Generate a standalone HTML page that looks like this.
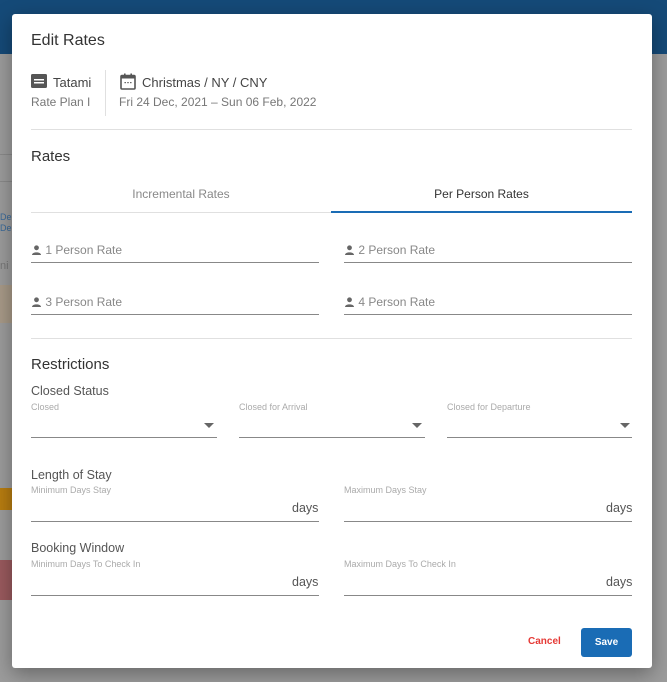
<!DOCTYPE html>
<html><head><meta charset="utf-8"><style>
*{box-sizing:border-box;margin:0;padding:0}
body{width:667px;height:682px;overflow:hidden;background:#9c9c9c;font-family:"Liberation Sans",Roboto,sans-serif;position:relative}
.hdr{position:absolute;left:0;top:0;width:667px;height:54px;background:#154a78}
.bl{position:absolute;left:0;width:12px;height:1px;background:#8a8a8a}
.dlg{position:absolute;left:12px;top:14px;width:640px;height:654px;background:#fff;border-radius:3px;box-shadow:0 6px 20px rgba(0,0,0,.35)}
.a{position:absolute;white-space:nowrap}
.t{color:#333}
.g{color:#777}
.lg{color:#999}
.line{position:absolute;height:1px;background:#888}
.hr{position:absolute;height:1px;background:#e0e0e0}
.caret{position:absolute;width:0;height:0;border-left:5px solid transparent;border-right:5px solid transparent;border-top:5px solid #666}
</style></head><body>
<div class="hdr"></div>
<div class="bl" style="top:154px"></div><div class="bl" style="top:181px"></div>
<div class="a" style="left:0;top:212px;width:12px;height:24px;font-size:9px;color:#3a6a9a;line-height:11px">De<br>De</div>
<div class="a" style="left:0;top:260px;width:12px;height:22px;color:#777;font-size:11px">ni</div>
<div class="a" style="left:0;top:285px;width:12px;height:38px;background:#a89a88"></div>
<div class="a" style="left:0;top:488px;width:12px;height:22px;background:#b87d10"></div>
<div class="a" style="left:0;top:560px;width:12px;height:40px;background:#9a5a5e"></div>
<div class="dlg">
<div class="a t" style="left:19px;top:18px;font-size:16px">Edit Rates</div>
<svg class="a" style="left:19px;top:60px" width="16" height="14" viewBox="0 0 16 14"><rect x="0" y="0" width="16" height="14" rx="1.5" fill="#555"/><rect x="3" y="5" width="10" height="1.5" fill="#fff"/><rect x="3" y="8" width="10" height="1.5" fill="#fff"/></svg>
<div class="a t" style="left:41px;top:61px;font-size:13px;color:#444">Tatami</div>
<div class="a g" style="left:19px;top:81px;font-size:12px">Rate Plan I</div>
<div class="a" style="left:93px;top:56px;width:1px;height:46px;background:#e0e0e0"></div>
<svg class="a" style="left:108px;top:59px" width="16" height="17" viewBox="0 0 16 17"><rect x="1" y="2.5" width="14" height="13.5" rx="1" fill="none" stroke="#555" stroke-width="1.6"/><rect x="1" y="2.5" width="14" height="3" fill="#555"/><rect x="4" y="0.5" width="1.6" height="3" fill="#555"/><rect x="10.4" y="0.5" width="1.6" height="3" fill="#555"/><rect x="4.5" y="9" width="1.4" height="1.2" fill="#555"/><rect x="7.3" y="9" width="1.4" height="1.2" fill="#555"/><rect x="10.1" y="9" width="1.4" height="1.2" fill="#555"/></svg>
<div class="a" style="left:130px;top:61px;font-size:13px;color:#444">Christmas / NY / CNY</div>
<div class="a g" style="left:107px;top:81px;font-size:12px">Fri 24 Dec, 2021 – Sun 06 Feb, 2022</div>
<div class="hr" style="left:19px;top:115px;width:601px"></div>
<div class="a t" style="left:19px;top:134px;font-size:15px">Rates</div>
<div class="a lg" style="left:19px;top:173px;width:300px;text-align:center;font-size:12px;color:#888">Incremental Rates</div>
<div class="a t" style="left:319px;top:173px;width:301px;text-align:center;font-size:12px">Per Person Rates</div>
<div class="hr" style="left:19px;top:198px;width:300px;height:1px"></div>
<div class="a" style="left:319px;top:197px;width:301px;height:2px;background:#1a6cb5"></div>
<div class="a g" style="left:19px;top:230px;font-size:12px;color:#888"><span style="font-size:10px">&#9650;</span></div>
<div class="a g" style="left:19px;top:229px;font-size:12px;color:#888;background:#fff"><svg width="11" height="10" viewBox="0 0 11 10" style="vertical-align:-1px"><circle cx="5.5" cy="2.8" r="2.4" fill="#666"/><path d="M1 10 C1 6.5 10 6.5 10 10Z" fill="#666"/></svg> 1 Person Rate</div>
<div class="line" style="left:19px;top:248px;width:288px"></div>
<div class="a g" style="left:332px;top:229px;font-size:12px;color:#888;background:#fff"><svg width="11" height="10" viewBox="0 0 11 10" style="vertical-align:-1px"><circle cx="5.5" cy="2.8" r="2.4" fill="#666"/><path d="M1 10 C1 6.5 10 6.5 10 10Z" fill="#666"/></svg> 2 Person Rate</div>
<div class="line" style="left:332px;top:248px;width:288px"></div>
<div class="a g" style="left:19px;top:281px;font-size:12px;color:#888;background:#fff"><svg width="11" height="10" viewBox="0 0 11 10" style="vertical-align:-1px"><circle cx="5.5" cy="2.8" r="2.4" fill="#666"/><path d="M1 10 C1 6.5 10 6.5 10 10Z" fill="#666"/></svg> 3 Person Rate</div>
<div class="line" style="left:19px;top:300px;width:288px"></div>
<div class="a g" style="left:332px;top:281px;font-size:12px;color:#888;background:#fff"><svg width="11" height="10" viewBox="0 0 11 10" style="vertical-align:-1px"><circle cx="5.5" cy="2.8" r="2.4" fill="#666"/><path d="M1 10 C1 6.5 10 6.5 10 10Z" fill="#666"/></svg> 4 Person Rate</div>
<div class="line" style="left:332px;top:300px;width:288px"></div>
<div class="hr" style="left:19px;top:324px;width:601px"></div>
<div class="a t" style="left:19px;top:342px;font-size:15px">Restrictions</div>
<div class="a g" style="left:19px;top:370px;font-size:12.5px;color:#555">Closed Status</div>
<div class="a lg" style="left:19px;top:388px;font-size:9px;color:#aaa">Closed</div>
<div class="caret" style="left:192px;top:409px"></div>
<div class="line" style="left:19px;top:423px;width:186px"></div>
<div class="a lg" style="left:227px;top:388px;font-size:9px;color:#aaa">Closed for Arrival</div>
<div class="caret" style="left:400px;top:409px"></div>
<div class="line" style="left:227px;top:423px;width:186px"></div>
<div class="a lg" style="left:435px;top:388px;font-size:9px;color:#aaa">Closed for Departure</div>
<div class="caret" style="left:608px;top:409px"></div>
<div class="line" style="left:435px;top:423px;width:185px"></div>
<div class="a g" style="left:19px;top:454px;font-size:12.5px;color:#555">Length of Stay</div>
<div class="a lg" style="left:19px;top:471px;font-size:9px;color:#aaa">Minimum Days Stay</div>
<div class="a g" style="left:280px;top:487px;font-size:12.5px;color:#555">days</div>
<div class="line" style="left:19px;top:507px;width:288px"></div>
<div class="a lg" style="left:332px;top:471px;font-size:9px;color:#aaa">Maximum Days Stay</div>
<div class="a g" style="left:594px;top:487px;font-size:12.5px;color:#555">days</div>
<div class="line" style="left:332px;top:507px;width:288px"></div>
<div class="a g" style="left:19px;top:527px;font-size:12.5px;color:#555">Booking Window</div>
<div class="a lg" style="left:19px;top:545px;font-size:9px;color:#aaa">Minimum Days To Check In</div>
<div class="a g" style="left:280px;top:561px;font-size:12.5px;color:#555">days</div>
<div class="line" style="left:19px;top:581px;width:288px"></div>
<div class="a lg" style="left:332px;top:545px;font-size:9px;color:#aaa">Maximum Days To Check In</div>
<div class="a g" style="left:594px;top:561px;font-size:12.5px;color:#555">days</div>
<div class="line" style="left:332px;top:581px;width:288px"></div>
<div class="a" style="left:516px;top:622px;font-size:10px;font-weight:bold;color:#e53935">Cancel</div>
<div class="a" style="left:569px;top:614px;width:51px;height:29px;background:#1a6cb5;border-radius:3px;color:#fff;font-size:10px;font-weight:bold;text-align:center;line-height:29px">Save</div>
</div>
</body></html>
